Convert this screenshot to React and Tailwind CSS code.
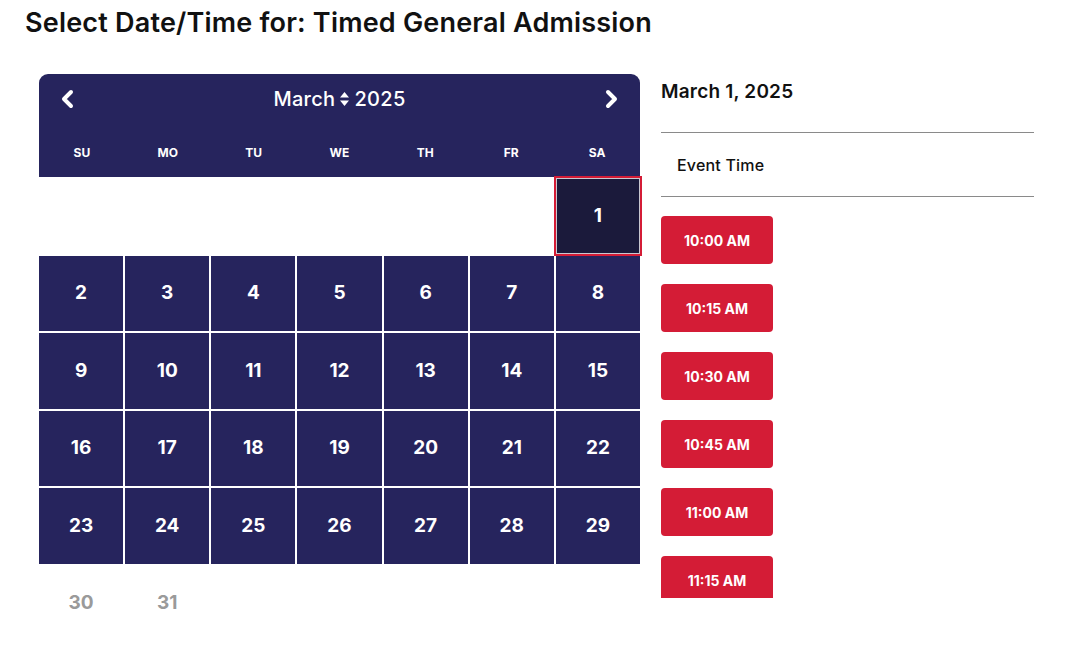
import React from 'react';

const NAVY = 'bg-[#26245d]';

const weekDays = ['SU', 'MO', 'TU', 'WE', 'TH', 'FR', 'SA'];

const times = ['10:00 AM', '10:15 AM', '10:30 AM', '10:45 AM', '11:00 AM', '11:15 AM'];

const Chevron = ({ dir }) => (
    <svg width="16" height="20" viewBox="0 0 16 20" fill="none">
        <path
            d={dir === 'left' ? 'M11 3 L4 10 L11 17' : 'M5 3 L12 10 L5 17'}
            stroke="white"
            strokeWidth="4"
            strokeLinecap="round"
            strokeLinejoin="round"
        />
    </svg>
);

const SortIcon = () => (
    <svg width="11" height="16" viewBox="0 0 11 16" className="mx-[4px]">
        <path d="M5.5 1 L10 6.5 L1 6.5 Z" fill="white" />
        <path d="M5.5 15 L10 9.5 L1 9.5 Z" fill="white" />
    </svg>
);

const DayCell = ({ day, selected, muted }) => {
    if (!day) return <div className="h-[75.5px]"></div>;
    if (muted) {
        return (
            <div className="h-[75.5px] flex items-center justify-center text-[19px] font-bold text-[#9a9a9a]">
                {day}
            </div>
        );
    }
    if (selected) {
        return (
            <div className="h-[75.5px] relative flex items-center justify-center bg-[#1b1a3b] text-white text-[19px] font-bold outline-2 outline-[#d41c36] outline-offset-0 border border-[#c8c8d0]">
                {day}
            </div>
        );
    }
    return (
        <div className={`h-[75.5px] flex items-center justify-center ${NAVY} text-white text-[19px] font-bold`}>
            {day}
        </div>
    );
};

const App = () => {
    const cells = [null, null, null, null, null, null, 1];
    for (let d = 2; d <= 29; d++) cells.push(d);

    return (
        <div className="w-[1080px] h-[648px] bg-white overflow-hidden font-['Inter',sans-serif] text-[#111]">
            <h1 className="pl-[25px] pt-[6px] text-[27px] leading-[34px] font-semibold tracking-[0.2px]">
                Select Date/Time for: Timed General Admission
            </h1>

            <div className="flex mt-[34px] pl-[39px]">
                {/* Calendar */}
                <div className="w-[601px]">
                    <div className={`${NAVY} rounded-t-[9px] text-white`}>
                        <div className="flex items-center justify-between h-[50px] px-[21px]">
                            <Chevron dir="left" />
                            <div className="flex items-center text-[20px] font-medium tracking-[0.3px]">
                                <span>March</span>
                                <SortIcon />
                                <span>2025</span>
                            </div>
                            <Chevron dir="right" />
                        </div>
                        <div className="grid grid-cols-7 h-[53px] items-center text-[12px] font-bold">
                            {weekDays.map((w) => (
                                <div key={w} className="text-center pt-[4px]">{w}</div>
                            ))}
                        </div>
                    </div>
                    <div className="grid grid-cols-7 gap-[2px] pt-[1px]">
                        {cells.map((d, i) => (
                            <DayCell key={i} day={d} selected={d === 1} />
                        ))}
                        <DayCell day={30} muted />
                        <DayCell day={31} muted />
                    </div>
                </div>

                {/* Times */}
                <div className="ml-[21px] w-[373px]">
                    <div className="text-[19px] font-semibold h-[58px] pt-[5px] leading-[26px] tracking-[0.2px]">March 1, 2025</div>
                    <div className="border-t border-[#8a8a8a]"></div>
                    <div className="h-[63px] flex items-center pl-[16px] text-[16px] font-medium tracking-[0.2px]">Event Time</div>
                    <div className="border-t border-[#8a8a8a]"></div>
                    <div className="h-[401px] overflow-hidden pt-[19px] flex flex-col gap-[20px]">
                        {times.map((t) => (
                            <button
                                key={t}
                                className="shrink-0 w-[112px] h-[48px] rounded-[4px] bg-[#d41c36] text-white text-[14px] font-bold"
                            >
                                {t}
                            </button>
                        ))}
                    </div>
                </div>
            </div>
        </div>
    );
};

export default App;
